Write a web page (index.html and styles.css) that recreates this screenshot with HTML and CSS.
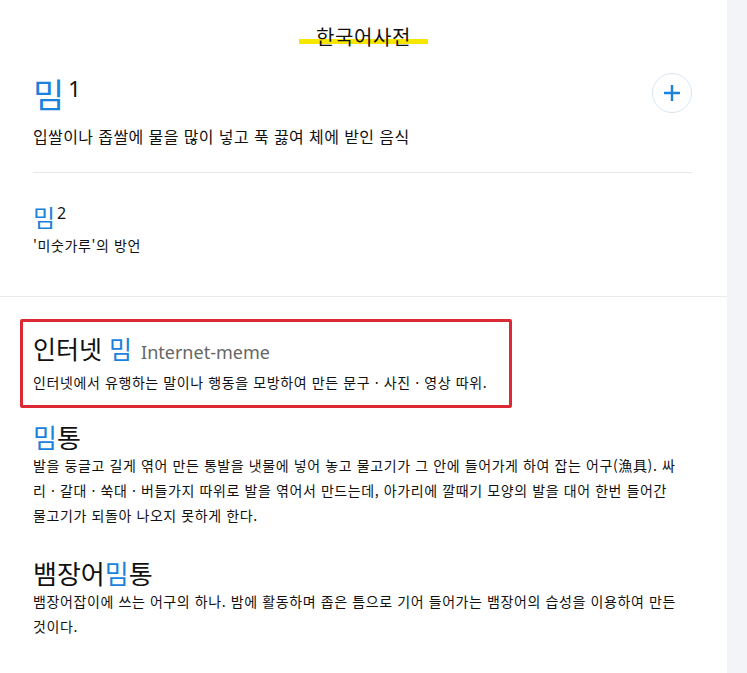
FILE: index.html
```html
<!DOCTYPE html>
<html lang="ko">
<head>
<meta charset="utf-8">
<title>한국어사전</title>
<link rel="stylesheet" href="styles.css">
</head>
<body>
<div class="page">
  <main class="main">
    <header class="head">
      <h1 class="head-title"><span class="head-text">한국어사전</span></h1>
    </header>

    <section class="group">
      <div class="entry entry-first">
        <div class="entry-row">
          <h2 class="word word-lg"><span class="hl">밈</span><sup class="num num-lg">1</sup></h2>
          <button class="plus" type="button" aria-label="더보기">
            <svg width="20" height="20" viewBox="0 0 20 20"><path d="M10 2v16M2 10h16" stroke="#1a82dc" stroke-width="2.4" fill="none"/></svg>
          </button>
        </div>
        <p class="def def-lg">입쌀이나 좁쌀에 물을 많이 넣고 푹 끓여 체에 받인 음식</p>
      </div>
      <div class="entry entry-second">
        <h2 class="word word-md"><span class="hl">밈</span><sup class="num num-md">2</sup></h2>
        <p class="def">'미숫가루'의 방언</p>
      </div>
    </section>

    <section class="list">
      <div class="entry entry-boxed">
        <h2 class="word word-sub">인터넷 <span class="hl">밈</span> <span class="orig">Internet-meme</span></h2>
        <p class="def">인터넷에서 유행하는 말이나 행동을 모방하여 만든 문구 · 사진 · 영상 따위.</p>
      </div>
      <div class="entry entry-plain">
        <h2 class="word word-sub2"><span class="hl">밈</span>통</h2>
        <p class="def def-multi">발을 둥글고 길게 엮어 만든 통발을 냇물에 넣어 놓고 물고기가 그 안에 들어가게 하여 잡는 어구(漁具). 싸<br>리 · 갈대 · 쑥대 · 버들가지 따위로 발을 엮어서 만드는데, 아가리에 깔때기 모양의 발을 대어 한번 들어간<br>물고기가 되돌아 나오지 못하게 한다.</p>
      </div>
      <div class="entry entry-plain">
        <h2 class="word word-sub2">뱀장어<span class="hl">밈</span>통</h2>
        <p class="def def-multi">뱀장어잡이에 쓰는 어구의 하나. 밤에 활동하며 좁은 틈으로 기어 들어가는 뱀장어의 습성을 이용하여 만든<br>것이다.</p>
      </div>
    </section>
  </main>
  <aside class="side"></aside>
</div>
</body>
</html>
```

FILE: styles.css
```css
* { box-sizing: border-box; }
html, body { margin: 0; padding: 0; }
body {
  font-family: "Noto Sans CJK KR", "Noto Sans", sans-serif;
  color: #111;
  background: #fff;
}
.page {
  display: flex;
  min-height: 673px;
}
.main {
  width: 727px;
  flex: none;
  background: #fff;
}
.side {
  flex: 1;
  background: #f3f4f7;
}
.head {
  display: flex;
  justify-content: center;
  padding-top: 24px;
}
.head-title {
  margin: 0;
  font-size: 20px;
  font-weight: 400;
  line-height: 26px;
  letter-spacing: 0.6px;
}
.head-text {
  display: inline-block;
  padding: 0 17px;
  background: linear-gradient(to bottom, transparent 0, transparent 15px, #f7e600 15px, #f7e600 20px, transparent 20px);
}
.group {
  padding: 0 35px 0 33px;
  border-bottom: 1px solid #ebebeb;
}
.entry-first {
  padding-top: 22px;
  padding-bottom: 24px;
  border-bottom: 1px solid #e8e8e8;
}
.entry-row {
  display: flex;
  justify-content: space-between;
  align-items: flex-start;
}
.word {
  margin: 0;
  font-weight: 400;
}
.hl { color: #1a82dc; }
.word-lg {
  font-size: 34px;
  line-height: 44px;
}
.num {
  font-family: "Noto Sans", sans-serif;
  color: #111;
  vertical-align: top;
  position: relative;
}
.num-lg { font-size: 22px; line-height: 22px; top: 5px; margin-left: 4px; }
.num-md { font-size: 16px; line-height: 16px; top: 3px; margin-left: 2px; }
.plus {
  width: 40px;
  height: 40px;
  border-radius: 50%;
  border: 1px solid #d7e8f2;
  background: #fff;
  display: flex;
  align-items: center;
  justify-content: center;
  padding: 0;
  margin-top: 1px;
}
.def {
  margin: 0;
  font-size: 14px;
  line-height: 22px;
  letter-spacing: 0.6px;
  color: #111;
}
.def-lg {
  font-size: 16px;
  line-height: 24px;
  letter-spacing: 0.4px;
  margin-top: 8px;
}
.entry-second {
  padding-top: 29px;
  padding-bottom: 40px;
}
.word-md {
  font-size: 24px;
  line-height: 30px;
}
.entry-second .def { margin-top: 2px; }
.list {
  padding: 22px 35px 30px 20px;
}
.entry-boxed {
  width: 492px;
  border: 3px solid #dc2a35;
  border-radius: 2px;
  padding: 9px 10px 12px 10px;
}
.word-sub {
  font-size: 25px;
  line-height: 34px;
}
.orig {
  font-family: "Noto Sans", sans-serif;
  font-size: 18px;
  color: #666;
  margin-left: 2px;
}
.entry-boxed .def { margin-top: 2px; }
.entry-plain {
  padding: 13px 0 0 13px;
  margin-bottom: 16px;
}
.word-sub2 {
  font-size: 26px;
  line-height: 32px;
}
.def-multi {
  line-height: 25px;
  margin-top: 0;
}
```
